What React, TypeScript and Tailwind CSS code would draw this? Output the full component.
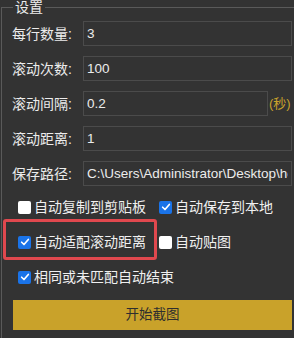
import type { ReactNode } from 'react';

const font = { fontFamily: '"Liberation Sans", "Noto Sans CJK SC", sans-serif' };

type FieldRowProps = {
  label: string;
  value: string;
  suffix?: string;
};

function FieldRow({ label, value, suffix }: FieldRowProps) {
  return (
    <div className="flex h-[25px] items-center">
      <span className="w-[81px] shrink-0 pl-[10px] text-[14px] leading-none text-[#ececec]">{label}</span>
      <input
        readOnly
        value={value}
        className="h-[25px] min-w-0 flex-1 border border-[#4b4b4b] bg-[#333333] px-[3px] text-[13.5px] text-[#ececec] outline-none"
      />
      {suffix ? (
        <span className="w-[24px] shrink-0 pl-[1px] text-[13px] leading-none text-[#c9a22c]">{suffix}</span>
      ) : null}
    </div>
  );
}

function Check({ checked, children }: { checked: boolean; children: ReactNode }) {
  return (
    <label className="flex items-center gap-[3px] text-[14px] leading-none text-[#f0f0f0]">
      {checked ? (
        <span className="flex h-[13px] w-[13px] items-center justify-center rounded-[2px] bg-[#1a73e8]">
          <svg viewBox="0 0 12 12" className="h-[10px] w-[10px]">
            <path d="M2 6.3 L4.8 9 L10 3" fill="none" stroke="white" strokeWidth="2" strokeLinecap="round" strokeLinejoin="round" />
          </svg>
        </span>
      ) : (
        <span className="h-[13px] w-[13px] rounded-[2px] bg-white" />
      )}
      {children}
    </label>
  );
}

export default function App() {
  return (
    <div className="h-[338px] w-[294px] overflow-hidden bg-[#333333]" style={font}>
      <fieldset className="ml-[1px] h-[360px] border-t border-l border-[#5a5a5a]">
        <legend className="ml-[11px] px-[2px] text-[14px] leading-[14px] text-[#ececec]">设置</legend>
        <div className="flex flex-col gap-[10px] pr-[7px] pt-[7px]">
          <FieldRow label="每行数量:" value="3" />
          <FieldRow label="滚动次数:" value="100" />
          <FieldRow label="滚动间隔:" value="0.2" suffix="(秒)" />
          <FieldRow label="滚动距离:" value="1" />
          <FieldRow label="保存路径:" value="C:\Users\Administrator\Desktop\hello" />
        </div>
        <div className="mt-[14px] flex flex-col gap-[21px] pl-[16px]">
          <div className="flex">
            <div className="w-[141px]">
              <Check checked={false}>自动复制到剪贴板</Check>
            </div>
            <Check checked>自动保存到本地</Check>
          </div>
          <div className="relative flex">
            <div className="w-[141px]">
              <Check checked>自动适配滚动距离</Check>
            </div>
            <Check checked={false}>自动贴图</Check>
            <div className="pointer-events-none absolute -left-[15px] -top-[16px] h-[41px] w-[154px] rounded-[3px] border-[3px] border-[#e0484e]" />
          </div>
          <Check checked>相同或未匹配自动结束</Check>
        </div>
        <div className="mt-[16px] pl-[11px] pr-[7px]">
          <button
            type="button"
            className="h-[30px] w-full bg-[#c9a22a] text-[13.5px] text-[#2e2e2e]"
          >
            开始截图
          </button>
        </div>
      </fieldset>
    </div>
  );
}
